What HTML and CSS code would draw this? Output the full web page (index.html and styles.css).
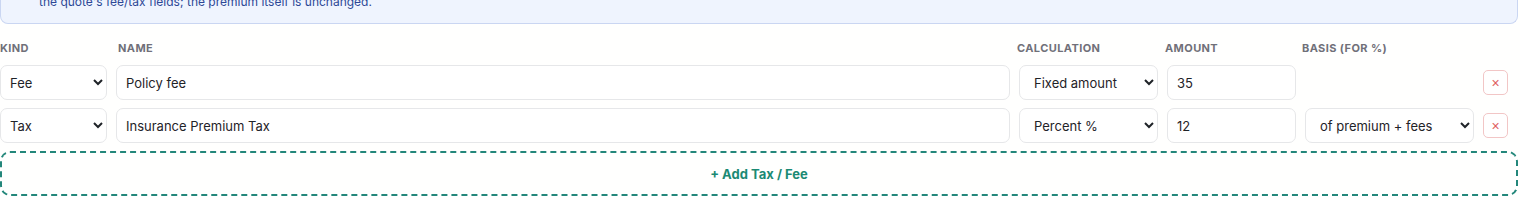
FILE: index.html
```html
<!DOCTYPE html>
<html lang="en">
  <head>
    <meta charset="UTF-8" />
    <meta name="viewport" content="width=device-width, initial-scale=1.0" />
    <title>Taxes &amp; Fees</title>
    <link rel="stylesheet" href="styles.css">
  </head>
  <body>
    <div class="panel">
      <div class="notice">
        the quote's fee/tax fields; the premium itself is unchanged.
      </div>

      <div class="grid header">
        <span>Kind</span>
        <span>Name</span>
        <span>Calculation</span>
        <span>Amount</span>
        <span>Basis (for %)</span>
        <span></span>
      </div>

      <div class="grid row">
        <select class="field kind">
          <option selected>Fee</option>
          <option>Tax</option>
        </select>
        <input class="field" type="text" value="Policy fee" />
        <select class="field calc">
          <option selected>Fixed amount</option>
          <option>Percent %</option>
        </select>
        <input class="field" type="text" value="35" />
        <span></span>
        <button class="remove">&times;</button>
      </div>

      <div class="grid row">
        <select class="field kind">
          <option>Fee</option>
          <option selected>Tax</option>
        </select>
        <input class="field" type="text" value="Insurance Premium Tax" />
        <select class="field calc">
          <option>Fixed amount</option>
          <option selected>Percent %</option>
        </select>
        <input class="field" type="text" value="12" />
        <select class="field calc">
          <option>of premium</option>
          <option selected>of premium + fees</option>
        </select>
        <button class="remove">&times;</button>
      </div>

      <button class="add-btn">+ Add Tax / Fee</button>
    </div>
  </body>
</html>
```

FILE: styles.css
```css
/* Page */
body {
  margin: 0;
  background: #fffffe;
  font-family: Inter, "Noto Sans", sans-serif;
  color: #1f2328;
  overflow: hidden;
}

.panel {
  width: 1518px;
}

/* Info notice (scrolled, only its last line shows) */
.notice {
  margin-top: -7px;
  padding: 0 16px 12px 38px;
  background: #eff4fe;
  border: 1px solid #cad6f2;
  border-radius: 0 0 8px 8px;
  border-top: none;
  color: #2d4896;
  font-size: 12px;
  line-height: 18px;
}

/* Shared grid */
.grid {
  display: grid;
  grid-template-columns: 107px 1fr 139px 129px 169px 35px;
  column-gap: 9px;
  align-items: center;
}

/* Column labels */
.header {
  margin-top: 18px;
  margin-bottom: 10px;
  font-size: 11px;
  font-weight: 700;
  letter-spacing: 0.4px;
  text-transform: uppercase;
  color: #707079;
  line-height: 13px;
}
.header span:nth-child(2) { padding-left: 2px; }
.header span:nth-child(3) { margin-left: -2px; }
.header span:nth-child(4) { margin-left: -2px; }
.header span:nth-child(5) { margin-left: -3px; }

/* Rows */
.row {
  margin-bottom: 8px;
}

.field {
  height: 35px;
  box-sizing: border-box;
  border: 1px solid #e6e7e9;
  border-radius: 7px;
  background: #fff;
  font-family: inherit;
  font-size: 13px;
  color: #1f2328;
  padding: 0 9px;
  outline: none;
  width: 100%;
}

select.field {
  padding-left: 5px;
}
select.calc {
  padding-left: 10px;
}

/* Delete button */
.remove {
  width: 25px;
  height: 25px;
  padding: 0;
  border: 1px solid #f2c6c6;
  border-radius: 5px;
  background: #fff;
  color: #e0605e;
  font-size: 14px;
  line-height: 1;
  cursor: pointer;
}

/* Add button */
.add-btn {
  display: block;
  width: 100%;
  height: 45px;
  margin-top: 2px;
  border: 2px dashed #23877a;
  border-radius: 10px;
  background: transparent;
  color: #1b8a74;
  font-family: inherit;
  font-size: 13px;
  font-weight: 700;
  cursor: pointer;
}
```
